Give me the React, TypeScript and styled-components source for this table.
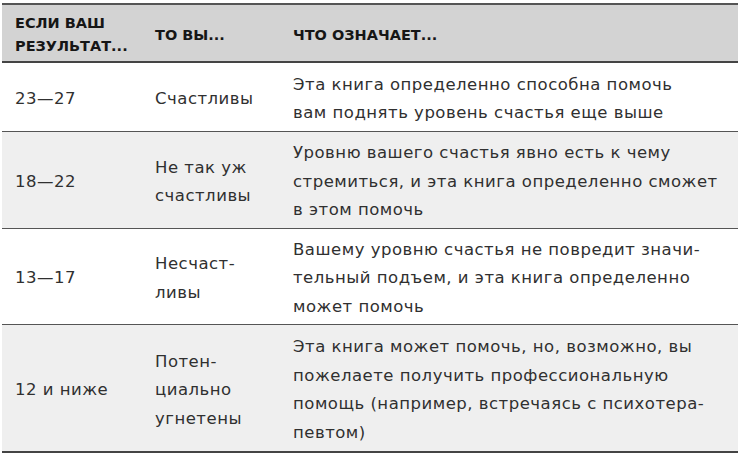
import React from 'react';
import styled, { createGlobalStyle } from 'styled-components';

const GlobalStyle = createGlobalStyle`
  html, body {
    margin: 0;
    padding: 0;
    background: #ffffff;
  }
  body {
    font-family: "DejaVu Sans", "Noto Sans", sans-serif;
    color: #2a2a2a;
  }
`;

const Page = styled.div`
  width: 742px;
  padding: 3px 4px 0 2px;
  box-sizing: border-box;
`;

const Table = styled.table`
  width: 100%;
  table-layout: fixed;
  border-collapse: collapse;
  border-top: 2px solid #555;
  border-bottom: 2px solid #444;
`;

const HeadRow = styled.tr`
  background: #d3d3d3;
  border-bottom: 2px solid #444;
`;

const HeadCell = styled.th<{ $w?: number }>`
  width: ${(p) => (p.$w ? `${p.$w}px` : 'auto')};
  height: 58px;
  padding: 4px 4px 0 13px;
  box-sizing: border-box;
  text-align: left;
  vertical-align: middle;
  font-size: 14.5px;
  font-weight: 700;
  line-height: 23px;
  color: #161616;
  text-transform: uppercase;
  white-space: nowrap;
`;

const Row = styled.tr<{ $shaded?: boolean; $h: number }>`
  background: ${(p) => (p.$shaded ? '#efefef' : '#ffffff')};
  height: ${(p) => p.$h}px;
  border-top: 1.5px solid #555;
`;

const Cell = styled.td`
  padding: 5px 2px 0 13px;
  vertical-align: middle;
  font-size: 16.5px;
  letter-spacing: 0.5px;
  line-height: 28.5px;
  color: #303030;
  white-space: nowrap;
`;

const rows = [
  {
    score: '23—27',
    you: ['Счастливы'],
    means: ['Эта книга определенно способна помочь', 'вам поднять уровень счастья еще выше'],
    h: 69,
  },
  {
    score: '18—22',
    you: ['Не так уж', 'счастливы'],
    means: [
      'Уровню вашего счастья явно есть к чему',
      'стремиться, и эта книга определенно сможет',
      'в этом помочь',
    ],
    h: 97,
  },
  {
    score: '13—17',
    you: ['Несчаст-', 'ливы'],
    means: [
      'Вашему уровню счастья не повредит значи-',
      'тельный подъем, и эта книга определенно',
      'может помочь',
    ],
    h: 96,
  },
  {
    score: '12 и ниже',
    you: ['Потен-', 'циально', 'угнетены'],
    means: [
      'Эта книга может помочь, но, возможно, вы',
      'пожелаете получить профессиональную',
      'помощь (например, встречаясь с психотера-',
      'певтом)',
    ],
    h: 128,
  },
];

const Lines: React.FC<{ lines: string[] }> = ({ lines }) => (
  <>
    {lines.map((l, i) => (
      <React.Fragment key={i}>
        {i > 0 && <br />}
        {l}
      </React.Fragment>
    ))}
  </>
);

const App: React.FC = () => {
  return (
    <Page>
      <GlobalStyle />
      <Table>
        <thead>
          <HeadRow>
            <HeadCell $w={140}>
              Если ваш
              <br />
              результат...
            </HeadCell>
            <HeadCell $w={138}>То вы...</HeadCell>
            <HeadCell>Что означает...</HeadCell>
          </HeadRow>
        </thead>
        <tbody>
          {rows.map((r, i) => (
            <Row key={r.score} $shaded={i % 2 === 1} $h={r.h}>
              <Cell>{r.score}</Cell>
              <Cell>
                <Lines lines={r.you} />
              </Cell>
              <Cell>
                <Lines lines={r.means} />
              </Cell>
            </Row>
          ))}
        </tbody>
      </Table>
    </Page>
  );
};

export default App;
